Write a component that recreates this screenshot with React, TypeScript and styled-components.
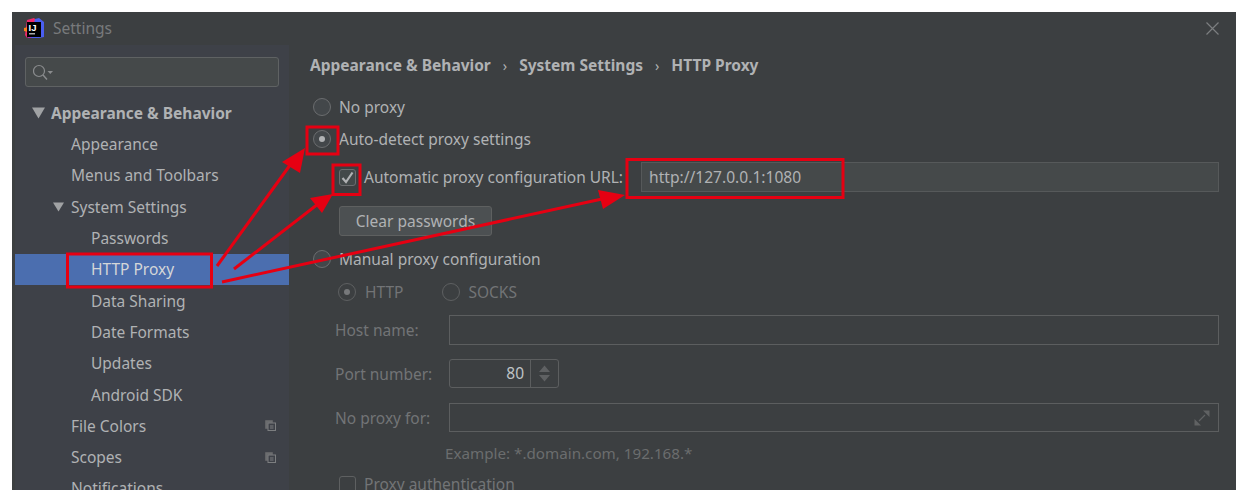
import React from "react";
import styled, { createGlobalStyle } from "styled-components";

const Global = createGlobalStyle`
  html, body { margin: 0; padding: 0; background: #fff; }
  body { font-family: "Noto Sans", "Open Sans", sans-serif; }
`;

const Page = styled.div`
  position: relative;
  width: 1248px;
  height: 502px;
  padding: 12px;
  box-sizing: border-box;
  overflow: hidden;
`;

const Window = styled.div`
  width: 1224px;
  height: 478px;
  background: #3c3f41;
  display: flex;
  flex-direction: column;
  overflow: hidden;
  font-size: 15.5px;
  color: #b0b2b4;
`;

const TitleBar = styled.div`
  height: 33px;
  flex: none;
  display: flex;
  align-items: center;
  padding: 0 17px 0 12px;
  gap: 8px;
`;

const TitleText = styled.span`
  color: #787a7c;
  font-size: 15.5px;
  line-height: 31px;
  padding-bottom: 1px;
  flex: 1;
`;

const Body = styled.div`
  flex: 1;
  display: flex;
  min-height: 0;
  padding-left: 3px;
`;

const Sidebar = styled.div`
  width: 274px;
  flex: none;
  background: #3e4148;
  padding-top: 12px;
  box-sizing: border-box;
  overflow: hidden;
`;

const SearchBox = styled.div`
  margin: 0 10px;
  height: 30px;
  box-sizing: border-box;
  border: 1px solid #5f6263;
  border-radius: 3px;
  background: #45494a;
  display: flex;
  align-items: center;
  padding-left: 7px;
`;

const Tree = styled.div`
  margin-top: 9.9px;
`;

const TreeRow = styled.div<{ $level: number; $selected?: boolean; $bold?: boolean }>`
  height: 31.33px;
  display: flex;
  align-items: center;
  box-sizing: border-box;
  padding-left: ${(p) => 17 + p.$level * 20}px;
  padding-right: 13px;
  background: ${(p) => (p.$selected ? "#4b6eaf" : "transparent")};
  color: ${(p) => (p.$selected ? "#d4d6d8" : "#b0b2b4")};
  font-weight: ${(p) => (p.$bold ? 700 : 400)};
`;

const ArrowSlot = styled.span`
  width: 19px;
  flex: none;
  display: flex;
  align-items: center;
`;

const TreeLabel = styled.span`
  flex: 1;
  white-space: nowrap;
`;

const Content = styled.div`
  flex: 1;
  min-width: 0;
  display: flex;
  flex-direction: column;
  padding: 9px 17px 0 21px;
  overflow: hidden;
`;

const Crumbs = styled.div`
  height: 24px;
  display: flex;
  align-items: center;
  font-weight: 700;
  gap: 12px;
  color: #b0b2b4;
`;

const CrumbSep = styled.span`
  font-weight: 400;
  font-size: 14px;
`;

const Row = styled.div<{ $top: number; $h?: number; $indent?: number; $dim?: boolean }>`
  flex: none;
  display: flex;
  align-items: center;
  height: ${(p) => p.$h ?? 24}px;
  margin-top: ${(p) => p.$top}px;
  margin-left: ${(p) => p.$indent ?? 0}px;
  color: ${(p) => (p.$dim ? "#727476" : "inherit")};
  white-space: nowrap;
`;

const Radio = styled.span<{ $on?: boolean; $dim?: boolean; $gap?: number }>`
  width: 18px;
  height: 18px;
  flex: none;
  box-sizing: border-box;
  margin-right: ${(p) => p.$gap ?? 8}px;
  border-radius: 50%;
  border: 1px solid ${(p) => (p.$dim ? "#5e6061" : "#6b6d6f")};
  background: ${(p) => (p.$dim ? "transparent" : "#43474a")};
  display: flex;
  align-items: center;
  justify-content: center;
  &::after {
    content: "";
    display: ${(p) => (p.$on ? "block" : "none")};
    width: 6px;
    height: 6px;
    border-radius: 50%;
    background: ${(p) => (p.$dim ? "#77797b" : "#b0b2b4")};
  }
`;

const Check = styled.span<{ $dim?: boolean }>`
  width: 17px;
  height: 17px;
  flex: none;
  box-sizing: border-box;
  margin-right: 8px;
  border-radius: 3px;
  border: 1px solid ${(p) => (p.$dim ? "#5e6061" : "#6b6d6f")};
  background: ${(p) => (p.$dim ? "transparent" : "#43494a")};
  display: flex;
  align-items: center;
  justify-content: center;
`;

const Field = styled.div<{ $disabled?: boolean }>`
  flex: 1;
  height: 100%;
  box-sizing: border-box;
  border: 1px solid ${(p) => (p.$disabled ? "#5c5e5f" : "#56595a")};
  background: ${(p) => (p.$disabled ? "transparent" : "#45494a")};
  display: flex;
  align-items: center;
  padding-left: 7px;
  font-size: 15.6px;
  color: #b0b2b4;
`;

const ExpandSlot = styled.span`
  margin-left: auto;
  margin-right: 8px;
  display: flex;
`;

const Button = styled.div`
  width: 153px;
  height: 30px;
  box-sizing: border-box;
  margin-left: 26px;
  border: 1px solid #5e6060;
  border-radius: 3px;
  background: #4c5052;
  display: flex;
  align-items: center;
  justify-content: center;
  color: #b0b2b4;
`;

const Label = styled.span<{ $width?: number; $gap?: number }>`
  flex: none;
  width: ${(p) => (p.$width ? `${p.$width}px` : "auto")};
  margin-right: ${(p) => p.$gap ?? 0}px;
`;

const FieldLabel = styled.span`
  width: 114px;
  flex: none;
  margin-left: 25px;
  color: #727476;
`;

const Spinner = styled.div`
  width: 110px;
  height: 100%;
  box-sizing: border-box;
  border: 1px solid #5c5e5f;
  border-radius: 3px;
  display: flex;
`;

const SpinnerValue = styled.span`
  flex: 1;
  text-align: right;
  padding-right: 6px;
  line-height: 27px;
  color: #bfc3c6;
`;

const SpinnerArrows = styled.span`
  width: 27px;
  border-left: 1px solid #5c5e5f;
  display: flex;
  align-items: center;
  justify-content: center;
`;

const Hint = styled.div`
  height: 20px;
  margin: 11px 0 0 135px;
  flex: none;
  line-height: 20px;
  font-size: 15.2px;
  color: #6b6d6e;
  white-space: nowrap;
`;

const Overlay = styled.svg`
  position: absolute;
  left: 0;
  top: 0;
  pointer-events: none;
`;

const Logo = () => (
  <svg width="21" height="21" viewBox="0 0 21 21" style={{ flex: "none" }}>
    <path d="M3 2 L10 0 L13 3 L3 20 L1 17 Z" fill="#f0286a" />
    <path d="M0 10 L4 9 L4 14 L0 13 Z" fill="#fc801d" />
    <path d="M11 1 L15 0 L20 4 L20 19 L15 20 L6 20 Z" fill="#4a5ef0" />
    <path d="M3 17 L8 20 L4 20 Z" fill="#b32bb0" />
    <rect x="3" y="4" width="14" height="15" fill="#000" />
    <text x="4.500" y="12.500" fontSize="9.500" fontWeight="700" fill="#fff" fontFamily="Liberation Sans, sans-serif">IJ</text>
    <rect x="5" y="15" width="6" height="1.500" fill="#aaa" />
  </svg>
);

const CloseIcon = () => (
  <svg width="13" height="13" viewBox="0 0 13 13">
    <path d="M.5.5l12 12M12.5.5l-12 12" stroke="#7c7e80" strokeWidth="1.2" fill="none" />
  </svg>
);

const SearchIcon = () => (
  <svg width="22" height="18" viewBox="0 0 22 18">
    <circle cx="6" cy="8" r="5.500" stroke="#8a8c8e" strokeWidth="1.200" fill="none" />
    <path d="M10 12l4 4.500" stroke="#8a8c8e" strokeWidth="1.400" />
    <path d="M14.500 8h5.500l-2.700 3z" fill="#8a8c8e" />
  </svg>
);

const TreeArrow = ({ big }: { big?: boolean }) => (
  <svg width="13" height="12" viewBox="0 0 13 12">
    {big ? <path d="M0 .5h13L6.500 11.500z" fill="#a0a2a4" /> : <path d="M1 1.500h11L6.500 10.500z" fill="#a0a2a4" />}
  </svg>
);

const CopyIcon = () => (
  <svg width="11" height="11" viewBox="0 0 11 11">
    <path d="M.5.5h7v2h-5v6h-2z" fill="#6b6d6f" stroke="#6b6d6f" strokeWidth=".6" />
    <rect x="3" y="3" width="7.500" height="7.500" fill="#3e4148" stroke="#7c7e80" />
    <path d="M5 6h3.500M5 8h3.500" stroke="#7c7e80" />
  </svg>
);

const CheckMark = () => (
  <svg width="13" height="13" viewBox="0 0 13 13">
    <path d="M1.500 7l3.500 4L11.500 1.500" stroke="#b0b2b4" strokeWidth="2.200" fill="none" />
  </svg>
);

const StepArrows = () => (
  <svg width="13" height="19" viewBox="0 0 13 19">
    <path d="M1 8l5.500-6.500L12 8z" fill="#5f6163" />
    <path d="M1 11l5.500 6.500L12 11z" fill="#5f6163" />
  </svg>
);

const ExpandIcon = () => (
  <svg width="16" height="16" viewBox="0 0 16 16">
    <path d="M5 11l6-6" stroke="#606263" strokeWidth="1.200" />
    <path d="M9 .5h6.500V7z" fill="#606263" />
    <path d="M.5 9v6.500H7z" fill="#606263" />
  </svg>
);

const RED = "#e60012";

const Annotations = () => (
  <Overlay width="1248" height="502" viewBox="0 0 1248 502">
    <g fill="none" stroke={RED} strokeWidth="3">
      <rect x="67.500" y="254" width="144" height="33" />
      <rect x="307" y="127" width="31" height="27" />
      <rect x="333" y="165" width="27" height="29.500" />
      <rect x="627" y="159.500" width="216" height="38" />
      <path d="M217 266L293 161" />
      <path d="M234 269L318 204" />
      <path d="M222 282L602 199" />
    </g>
    <g fill={RED}>
      <path d="M305 148L282 162L300 173z" />
      <path d="M333 194L310 198L322 213z" />
      <path d="M625 195L598 190L603 209z" />
    </g>
  </Overlay>
);

export default function App() {
  return (
    <Page>
      <Global />
      <Window>
        <TitleBar>
          <Logo />
          <TitleText>Settings</TitleText>
          <CloseIcon />
        </TitleBar>
        <Body>
          <Sidebar>
            <SearchBox>
              <SearchIcon />
            </SearchBox>
            <Tree>
              <TreeRow $level={0} $bold>
                <ArrowSlot><TreeArrow big /></ArrowSlot>
                <TreeLabel>Appearance &amp; Behavior</TreeLabel>
              </TreeRow>
              <TreeRow $level={1}><ArrowSlot /><TreeLabel>Appearance</TreeLabel></TreeRow>
              <TreeRow $level={1}><ArrowSlot /><TreeLabel>Menus and Toolbars</TreeLabel></TreeRow>
              <TreeRow $level={1}>
                <ArrowSlot><TreeArrow /></ArrowSlot>
                <TreeLabel>System Settings</TreeLabel>
              </TreeRow>
              <TreeRow $level={2}><ArrowSlot /><TreeLabel>Passwords</TreeLabel></TreeRow>
              <TreeRow $level={2} $selected><ArrowSlot /><TreeLabel>HTTP Proxy</TreeLabel></TreeRow>
              <TreeRow $level={2}><ArrowSlot /><TreeLabel>Data Sharing</TreeLabel></TreeRow>
              <TreeRow $level={2}><ArrowSlot /><TreeLabel>Date Formats</TreeLabel></TreeRow>
              <TreeRow $level={2}><ArrowSlot /><TreeLabel>Updates</TreeLabel></TreeRow>
              <TreeRow $level={2}><ArrowSlot /><TreeLabel>Android SDK</TreeLabel></TreeRow>
              <TreeRow $level={1}><ArrowSlot /><TreeLabel>File Colors</TreeLabel><CopyIcon /></TreeRow>
              <TreeRow $level={1}><ArrowSlot /><TreeLabel>Scopes</TreeLabel><CopyIcon /></TreeRow>
              <TreeRow $level={1}><ArrowSlot /><TreeLabel>Notifications</TreeLabel></TreeRow>
            </Tree>
          </Sidebar>
          <Content>
            <Crumbs>
              <span>Appearance &amp; Behavior</span>
              <CrumbSep>›</CrumbSep>
              <span>System Settings</span>
              <CrumbSep>›</CrumbSep>
              <span>HTTP Proxy</span>
            </Crumbs>
            <Row $top={19} $indent={3}><Radio /><span>No proxy</span></Row>
            <Row $top={8} $indent={3}><Radio $on /><span>Auto-detect proxy settings</span></Row>
            <Row $top={11} $h={30} $indent={29}>
              <Check><CheckMark /></Check>
              <Label $width={277}>Automatic proxy configuration URL:</Label>
              <Field>http://127.0.0.1:1080</Field>
            </Row>
            <Row $top={14} $h={30} $indent={3}><Button>Clear passwords</Button></Row>
            <Row $top={11} $indent={3}><Radio /><span>Manual proxy configuration</span></Row>
            <Row $top={9} $indent={28} $dim>
              <Radio $on $dim $gap={9} /><Label $gap={39}>HTTP</Label>
              <Radio $dim /><span>SOCKS</span>
            </Row>
            <Row $top={11} $h={30} $dim><FieldLabel>Host name:</FieldLabel><Field $disabled /></Row>
            <Row $top={14} $h={29} $dim>
              <FieldLabel>Port number:</FieldLabel>
              <Spinner>
                <SpinnerValue>80</SpinnerValue>
                <SpinnerArrows><StepArrows /></SpinnerArrows>
              </Spinner>
            </Row>
            <Row $top={15} $h={29} $dim>
              <FieldLabel>No proxy for:</FieldLabel>
              <Field $disabled><ExpandSlot><ExpandIcon /></ExpandSlot></Field>
            </Row>
            <Hint>Example: *.domain.com, 192.168.*</Hint>
            <Row $top={9} $indent={29} $dim><Check $dim /><span>Proxy authentication</span></Row>
          </Content>
        </Body>
      </Window>
      <Annotations />
    </Page>
  );
}
